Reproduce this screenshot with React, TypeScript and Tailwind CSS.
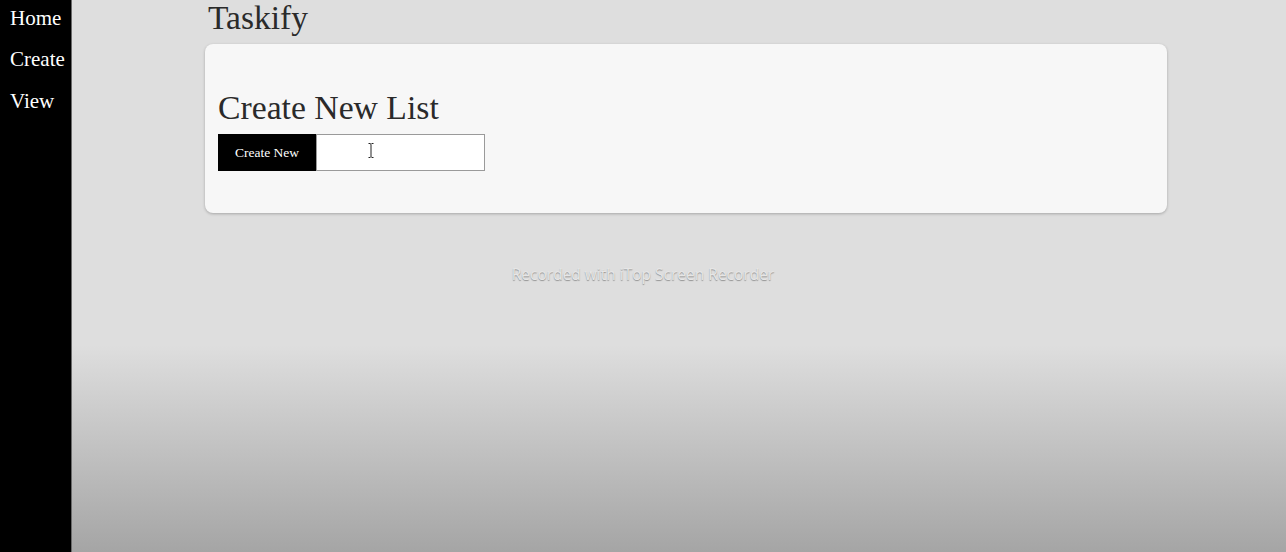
import React from "react";

export default function App() {
  const serif = { fontFamily: '"Liberation Serif", "Times New Roman", serif' } as React.CSSProperties;
  return (
    <div className="flex h-[552px] w-[1286px] overflow-hidden" style={serif}>
      <nav className="flex h-full w-[72px] shrink-0 flex-col border-r border-[#6a6a6a] bg-black pl-[10px] pt-[4px] text-[21px] text-white">
        <a className="h-[41px] leading-[28px]">Home</a>
        <a className="h-[41px] leading-[28px]">Create</a>
        <a className="h-[41px] pt-[1px] leading-[28px]">View</a>
      </nav>
      <main className="relative flex-1 bg-[linear-gradient(to_bottom,#dedede_0px,#dedede_345px,#a5a5a5_552px)]">
        <div className="ml-[133px] w-[962px]">
          <h1 className="ml-[3px] h-[44px] text-[33.5px] leading-[36px] text-[#2a2a2a]">Taskify</h1>
          <section className="h-[169px] rounded-[8px] bg-[#f7f7f7] pl-[13px] pt-[44px] shadow-[0_1px_3px_rgba(0,0,0,0.25)]">
            <h2 className="h-[46px] text-[33.7px] leading-[40px] text-[#2a2a2a]">Create New List</h2>
            <div className="flex h-[37px]">
              <button className="h-[37px] w-[98px] bg-black pt-[2px] text-[13.5px] text-white">Create New</button>
              <div className="relative h-[37px] w-[169px] border border-[#9a9a9a] bg-white">
                <svg className="absolute left-[51px] top-[8px]" width="6" height="15" viewBox="0 0 6 15">
                  <path d="M0.5 0.5 H2.2 L3 1.3 L3.8 0.5 H5.5 M3 1.3 V13.7 M0.5 14.5 H2.2 L3 13.7 L3.8 14.5 H5.5" stroke="#222" strokeWidth="1" fill="none" />
                </svg>
              </div>
            </div>
          </section>
        </div>
        <div
          className="absolute top-[263px] text-center text-[15.5px] text-[#e6e6e6] [text-shadow:0_1px_1px_rgba(0,0,0,0.35)]"
          style={{ fontFamily: '"Open Sans", "Noto Sans", sans-serif', left: "-72px", width: "1286px" }}
        >
          Recorded with iTop Screen Recorder
        </div>
      </main>
    </div>
  );
}
